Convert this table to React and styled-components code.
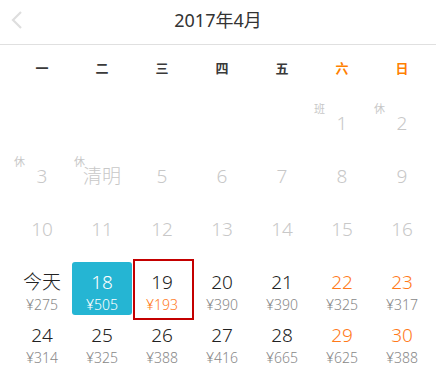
import React from "react";
import styled, { createGlobalStyle } from "styled-components";

const GlobalStyle = createGlobalStyle`
  html, body {
    margin: 0;
    padding: 0;
    background: #fff;
  }
  body {
    font-family: "Noto Sans", "Noto Sans CJK SC", sans-serif;
    color: #333;
  }
`;

const Wrapper = styled.div`
  width: 436px;
  height: 391px;
  background: #fff;
  overflow: hidden;
`;

const Header = styled.div`
  position: relative;
  height: 44px;
  display: flex;
  align-items: center;
  justify-content: center;
  border-bottom: 1px solid #e0e0e0;
`;

const BackButton = styled.button`
  position: absolute;
  left: 6px;
  top: 8px;
  width: 22px;
  height: 24px;
  padding: 0;
  border: none;
  background: transparent;
  display: flex;
  align-items: center;
  justify-content: center;
`;

const Title = styled.div`
  font-size: 18px;
  color: #333;
  margin-top: -7px;
`;

const WeekRow = styled.div`
  display: grid;
  grid-template-columns: repeat(7, 60px);
  padding: 0 4px 0 12px;
  height: 44px;
  align-items: center;
`;

const WeekDay = styled.div`
  text-align: center;
  font-size: 13px;
  font-weight: bold;
  color: ${(p) => (p.$weekend ? "#ff8000" : "#3a3a3a")};
`;

const Grid = styled.div`
  display: grid;
  grid-template-columns: repeat(7, 60px);
  grid-auto-rows: 53px;
  padding: 14px 4px 0 12px;
`;

const Cell = styled.div`
  position: relative;
  display: flex;
  flex-direction: column;
  align-items: center;
  padding-top: 6px;
  box-sizing: border-box;
  border-radius: 3px;
  background: ${(p) => (p.$active ? "#25b5d3" : "transparent")};

  ${(p) =>
    p.$picked &&
    `
    &::after {
      content: "";
      position: absolute;
      left: 1px;
      right: -2px;
      top: -3px;
      bottom: -5px;
      border: 2px solid #c40000;
    }
  `}
`;

const Tag = styled.span`
  position: absolute;
  left: 2px;
  top: 0;
  font-size: 11px;
  line-height: 12px;
  color: #c8c8c8;
`;

const DayNum = styled.div`
  font-size: 19px;
  line-height: 28px;
  font-weight: 300;
  color: ${(p) => p.$color};
`;

const Price = styled.div`
  font-size: 14px;
  line-height: 18px;
  font-weight: 300;
  color: ${(p) => p.$color};
`;

const GRAY = "#c8c8c8";
const DARK = "#222";
const ORANGE = "#ff7a1a";

const weekDays = ["一", "二", "三", "四", "五", "六", "日"];

const days = [
  null, null, null, null, null,
  { n: "1", tag: "班", off: true },
  { n: "2", tag: "休", off: true },
  { n: "3", tag: "休", off: true },
  { n: "清明", tag: "休", off: true },
  { n: "5", off: true },
  { n: "6", off: true },
  { n: "7", off: true },
  { n: "8", off: true },
  { n: "9", off: true },
  { n: "10", off: true },
  { n: "11", off: true },
  { n: "12", off: true },
  { n: "13", off: true },
  { n: "14", off: true },
  { n: "15", off: true },
  { n: "16", off: true },
  { n: "今天", price: 275 },
  { n: "18", price: 505, active: true },
  { n: "19", price: 193, picked: true },
  { n: "20", price: 390 },
  { n: "21", price: 390 },
  { n: "22", price: 325 },
  { n: "23", price: 317 },
  { n: "24", price: 314 },
  { n: "25", price: 325 },
  { n: "26", price: 388 },
  { n: "27", price: 416 },
  { n: "28", price: 665 },
  { n: "29", price: 625 },
  { n: "30", price: 388 },
];

const App = () => {
  return (
    <>
      <GlobalStyle />
      <Wrapper>
        <Header>
          <BackButton aria-label="上个月">
            <svg width="14" height="20" viewBox="0 0 14 20">
              <path
                d="M11 2 L3 10 L11 18"
                fill="none"
                stroke="#dedede"
                strokeWidth="2.2"
              />
            </svg>
          </BackButton>
          <Title>2017年4月</Title>
        </Header>

        <WeekRow>
          {weekDays.map((d, i) => (
            <WeekDay key={d} $weekend={i >= 5}>
              {d}
            </WeekDay>
          ))}
        </WeekRow>

        <Grid>
          {days.map((d, i) => {
            if (!d) return <Cell key={i} />;
            const weekend = i % 7 >= 5;
            let numColor = DARK;
            if (d.off) numColor = GRAY;
            else if (d.active) numColor = "#fff";
            else if (weekend) numColor = ORANGE;
            let priceColor = "#888";
            if (d.active) priceColor = "#fff";
            else if (d.picked) priceColor = ORANGE;
            return (
              <Cell key={i} $active={d.active} $picked={d.picked}>
                {d.tag && <Tag>{d.tag}</Tag>}
                <DayNum $color={numColor}>{d.n}</DayNum>
                {d.price && <Price $color={priceColor}>¥{d.price}</Price>}
              </Cell>
            );
          })}
        </Grid>
      </Wrapper>
    </>
  );
};

export default App;
